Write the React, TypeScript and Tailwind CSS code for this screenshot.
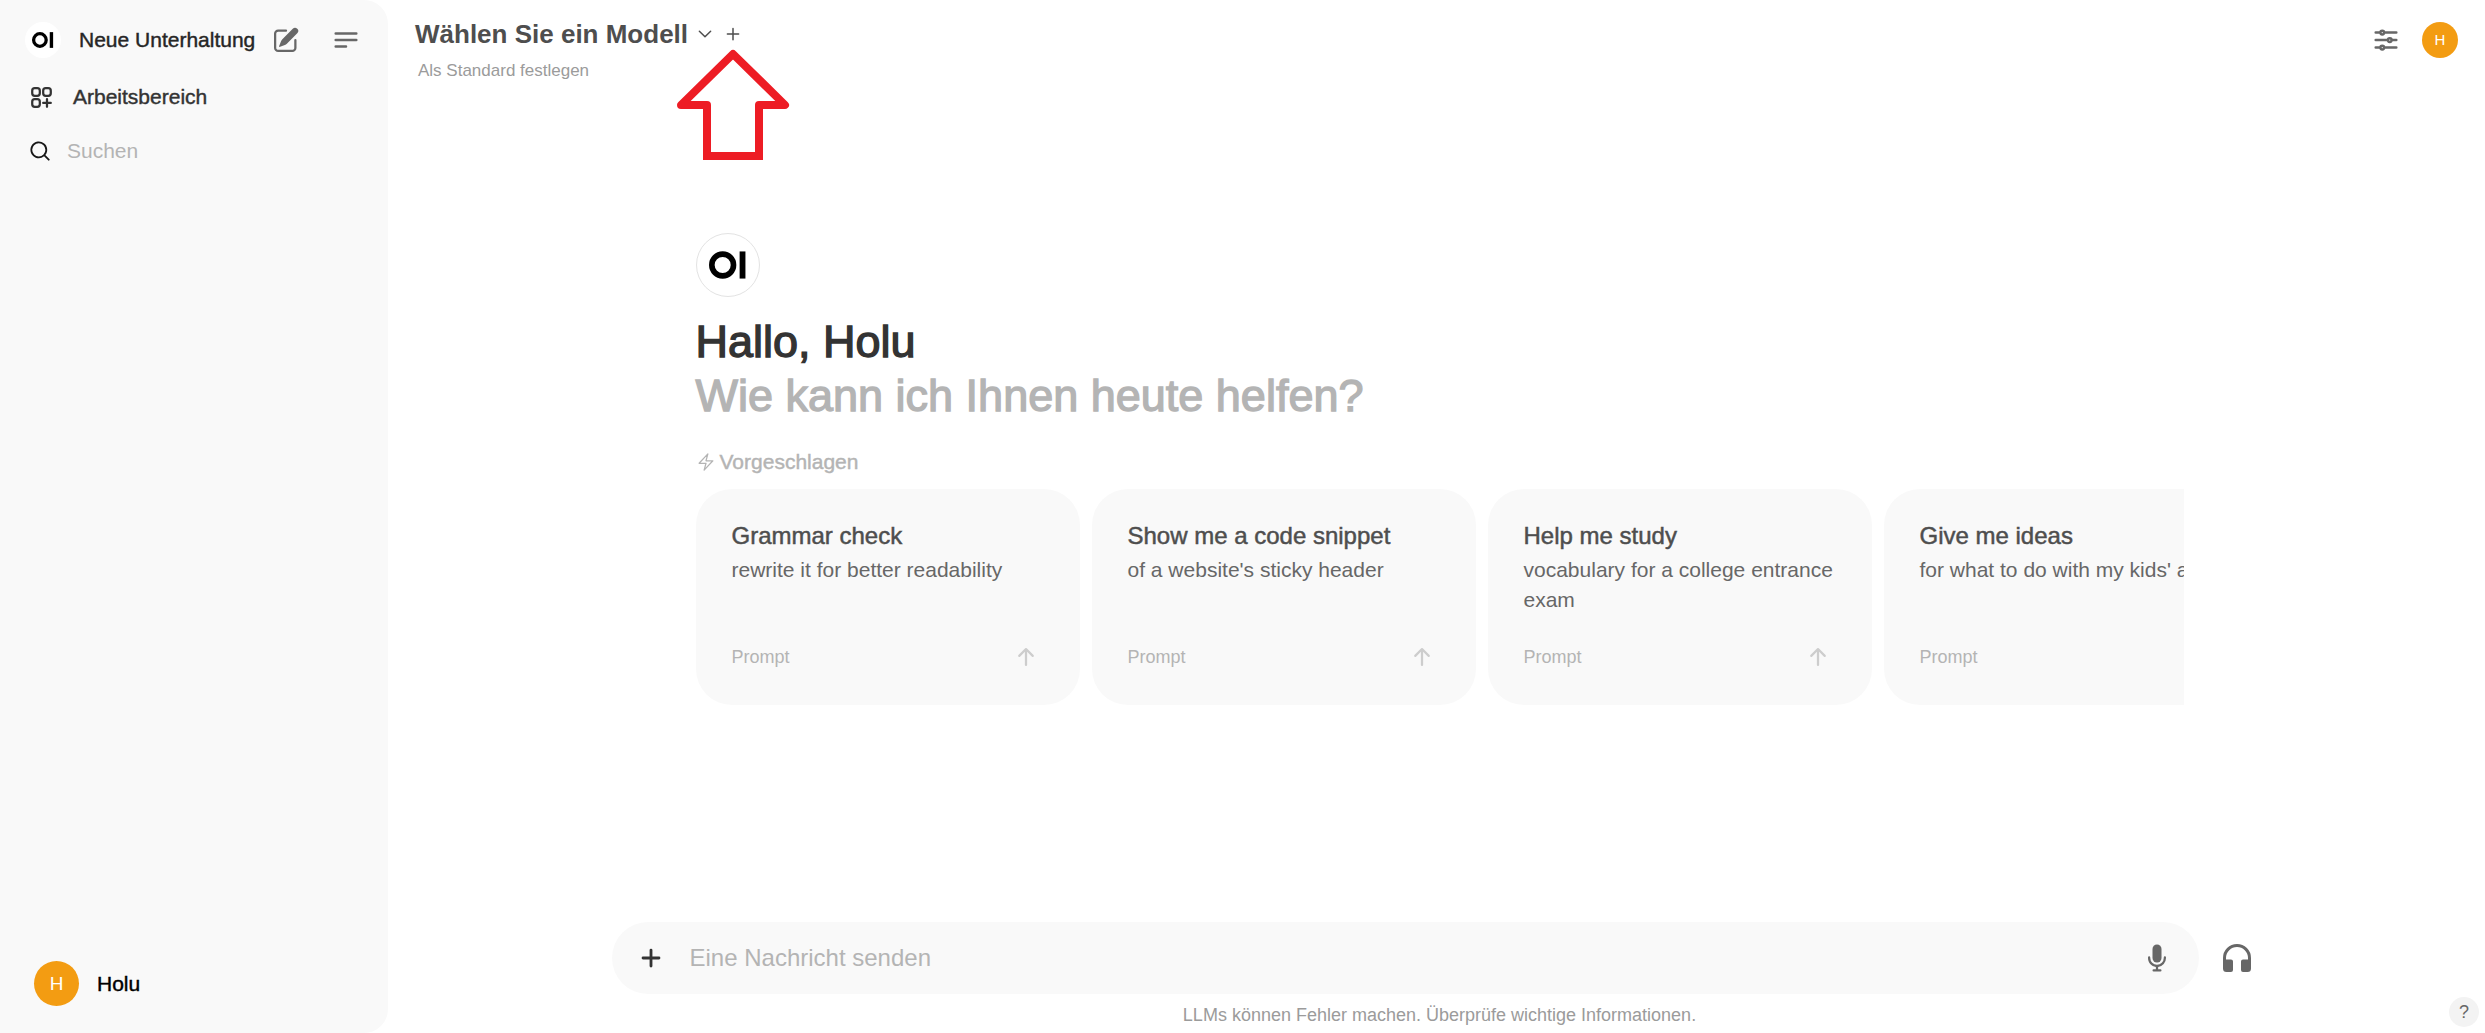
import type { ReactNode } from "react";

type IconProps = { className: string };

function Outline({ className, d, width = 2 }: IconProps & { d: string; width?: number }) {
  return (
    <svg className={className} viewBox="0 0 24 24" fill="none" stroke="currentColor" strokeWidth={width} strokeLinecap="round" strokeLinejoin="round" aria-hidden="true">
      <path d={d} />
    </svg>
  );
}

function Solid({ className, box, paths }: IconProps & { box: string; paths: string[] }) {
  return (
    <svg className={className} viewBox={box} fill="currentColor" aria-hidden="true">
      {paths.map((d) => (
        <path key={d} d={d} fillRule="evenodd" clipRule="evenodd" />
      ))}
    </svg>
  );
}

const PencilSquare = ({ className }: IconProps) => (
  <Solid
    className={className}
    box="0 0 20 20"
    paths={[
      "M5.433 13.917l1.262-3.155A4 4 0 017.58 9.42l6.92-6.918a2.121 2.121 0 013 3l-6.92 6.918c-.383.383-.84.685-1.343.886l-3.154 1.262a.5.5 0 01-.65-.65z",
      "M3.5 5.75c0-.69.56-1.25 1.25-1.25H10A.75.75 0 0010 3H4.75A2.75 2.75 0 002 5.75v9.5A2.75 2.75 0 004.75 18h9.5A2.75 2.75 0 0017 15.25V10a.75.75 0 00-1.5 0v5.25c0 .69-.56 1.25-1.25 1.25h-9.5c-.69 0-1.25-.56-1.25-1.25v-9.5z",
    ]}
  />
);

const Search = ({ className }: IconProps) => (
  <Solid
    className={className}
    box="0 0 20 20"
    paths={["M9 3.5a5.5 5.5 0 100 11 5.5 5.5 0 000-11zM2 9a7 7 0 1112.452 4.391l3.328 3.329a.75.75 0 11-1.06 1.06l-3.329-3.328A7 7 0 012 9z"]}
  />
);

const ArrowUp = ({ className }: IconProps) => (
  <Solid
    className={className}
    box="0 0 16 16"
    paths={["M8 14a.75.75 0 0 1-.75-.75V4.56L4.03 7.78a.75.75 0 0 1-1.06-1.06l4.5-4.5a.75.75 0 0 1 1.06 0l4.5 4.5a.75.75 0 0 1-1.06 1.06L8.75 4.56v8.69A.75.75 0 0 1 8 14Z"]}
  />
);

const PlusBold = ({ className }: IconProps) => (
  <Solid
    className={className}
    box="0 0 16 16"
    paths={["M8.75 3.75a.75.75 0 0 0-1.5 0v3.5h-3.5a.75.75 0 0 0 0 1.5h3.5v3.5a.75.75 0 0 0 1.5 0v-3.5h3.5a.75.75 0 0 0 0-1.5h-3.5v-3.5Z"]}
  />
);

const Microphone = ({ className }: IconProps) => (
  <Solid
    className={className}
    box="0 0 20 20"
    paths={[
      "M7 4a3 3 0 016 0v6a3 3 0 11-6 0V4z",
      "M5.5 9.643a.75.75 0 00-1.5 0V10c0 3.06 2.29 5.585 5.25 5.954V17.5h-1.5a.75.75 0 000 1.5h4.5a.75.75 0 000-1.5h-1.5v-1.546A6.001 6.001 0 0016 10v-.357a.75.75 0 00-1.5 0V10a4.5 4.5 0 01-9 0v-.357z",
    ]}
  />
);

const Headphones = ({ className }: IconProps) => (
  <Solid
    className={className}
    box="0 0 28 28"
    paths={["M0 14a14 14 0 0 1 28 0v10.500a3.500 3.500 0 0 1-3.500 3.500h-4.500a2 2 0 0 1-2-2v-8.500a2 2 0 0 1 2-2h5v-1.500a11 11 0 0 0-22 0v1.500h5a2 2 0 0 1 2 2v8.500a2 2 0 0 1-2 2H3.500A3.500 3.500 0 0 1 0 24.500z"]}
  />
);

function Logo({ className }: IconProps) {
  return (
    <svg className={className} viewBox="0 0 64 64" aria-hidden="true">
      <circle cx="26.500" cy="32" r="11.200" fill="none" stroke="#000" strokeWidth="5.800" />
      <rect x="44" y="18" width="6" height="28" fill="#000" />
    </svg>
  );
}

function PointerArrow() {
  return (
    <svg className="pointer-events-none absolute top-6 left-1/2 h-[112px] w-[114px] -translate-x-1/2" viewBox="0 0 114 112" fill="none" stroke="#ed1c24" strokeWidth="8" aria-hidden="true">
      <path d="M57 5l52 51H83v51H31V56H5z" strokeLinejoin="round" />
      <path d="M31 90v17h52V90" />
    </svg>
  );
}

function IconButton({ label, className, children }: { label: string; className: string; children: ReactNode }) {
  return (
    <button type="button" aria-label={label} className={className}>
      {children}
    </button>
  );
}

const suggestions = [
  { title: "Grammar check", text: "rewrite it for better readability" },
  { title: "Show me a code snippet", text: "of a website's sticky header" },
  { title: "Help me study", text: "vocabulary for a college entrance exam" },
  { title: "Give me ideas", text: "for what to do with my kids' art" },
];

function Sidebar() {
  return (
    <aside className="flex w-[388px] shrink-0 flex-col rounded-r-3xl bg-[#f9f9f9] text-[21px] leading-8">
      <div className="flex items-center px-[25px] pt-[22px]">
        <a href="#" className="flex flex-1 items-center text-[#262626]">
          <span className="mr-[18px] size-9 rounded-full bg-white">
            <Logo className="size-9" />
          </span>
          <span className="whitespace-nowrap [-webkit-text-stroke:0.02em_currentColor]">Neue Unterhaltung</span>
          <PencilSquare className="ml-auto size-[30px] text-[#676767]" />
        </a>
        <IconButton label="Seitenleiste" className="mr-0.5 ml-[30px] text-[#676767]">
          <Outline className="size-[30px]" d="M3.750 6.750h16.500M3.750 12h16.500m-16.500 5.250H12" />
        </IconButton>
      </div>
      <a href="#" className="mt-[23px] flex items-center gap-[18px] pl-7 text-[#333333]">
        <Outline
          className="size-[27px]"
          d="M13.500 16.875h3.375m0 0h3.375m-3.375 0V13.500m0 3.375v3.375M6 10.500h2.250a2.250 2.250 0 002.250-2.250V6a2.250 2.250 0 00-2.250-2.250H6A2.250 2.250 0 003.750 6v2.250A2.250 2.250 0 006 10.500zm0 9.750h2.250A2.250 2.250 0 0010.500 18v-2.250a2.250 2.250 0 00-2.250-2.250H6a2.250 2.250 0 00-2.250 2.250V18A2.250 2.250 0 006 20.250zm9.750-9.750H18a2.250 2.250 0 002.250-2.250V6A2.250 2.250 0 0018 3.750h-2.250A2.250 2.250 0 0013.500 6v2.250a2.250 2.250 0 002.250 2.250z"
        />
        <span className="[-webkit-text-stroke:0.02em_currentColor]">Arbeitsbereich</span>
      </a>
      <label className="mt-[22px] flex items-center gap-[15px] pl-7 text-[#171717]">
        <Search className="size-6" />
        <input type="text" aria-label="Suchen" placeholder="Suchen" className="h-8 w-[270px] bg-transparent outline-none placeholder:text-[#b4b4b4]" />
      </label>
      <button type="button" className="mt-auto mb-[27px] ml-[34px] flex items-center gap-[18px] text-black">
        <span className="flex size-[45px] items-center justify-center rounded-full bg-[#f39c12] text-[19px] text-white">H</span>
        <span className="[-webkit-text-stroke:0.02em_currentColor]">Holu</span>
      </button>
    </aside>
  );
}

function Header() {
  return (
    <header className="flex items-start justify-between pt-[18px] pr-[27px] pl-[21px]">
      <div>
        <div className="flex items-center text-[#4e4e4e]">
          <button type="button" className="flex items-center gap-2 text-[26px] leading-8 font-bold">
            Wählen Sie ein Modell
            <Outline className="size-[18px]" d="M19.500 8.250l-7.500 7.500-7.500-7.500" />
          </button>
          <div className="relative ml-2.5 flex">
            <IconButton label="Modell hinzufügen" className="text-[#4e4e4e]">
              <Outline className="size-[18px]" d="M12 4.500v15m7.500-7.500h-15" />
            </IconButton>
            <PointerArrow />
          </div>
        </div>
        <button type="button" className="mt-[9px] ml-[3px] block text-[17px] leading-6 text-[#9b9b9b]">Als Standard festlegen</button>
      </div>
      <div className="mt-1 flex items-center gap-[21px]">
        <IconButton label="Steuerung" className="text-[#676767]">
          <Outline
            className="size-[30px]"
            d="M10.500 6h9.750M10.500 6a1.500 1.500 0 11-3 0m3 0a1.500 1.500 0 10-3 0M3.750 6H7.500m3 12h9.750m-9.750 0a1.500 1.500 0 01-3 0m3 0a1.500 1.500 0 00-3 0m-3.750 0H7.500m9-6h3.750m-3.750 0a1.500 1.500 0 01-3 0m3 0a1.500 1.500 0 00-3 0m-9.750 0h9.750"
          />
        </IconButton>
        <button type="button" className="flex size-9 items-center justify-center rounded-full bg-[#f39c12] text-[15px] text-white">H</button>
      </div>
    </header>
  );
}

function Welcome() {
  return (
    <section className="mx-auto w-full max-w-[1488px]">
      <div className="size-16 rounded-full border border-[#e3e3e3]">
        <Logo className="size-full" />
      </div>
      <h1 className="mt-[18px] text-[45px] leading-[54px] text-[#333333] [-webkit-text-stroke:0.03em_currentColor]">
        Hallo, Holu
        <span className="block text-[#b4b4b4]">Wie kann ich Ihnen heute helfen?</span>
      </h1>
      <h2 className="mt-6 flex items-center gap-1 text-[21px] leading-[30px] text-[#b4b4b4] [-webkit-text-stroke:0.02em_currentColor]">
        <Outline className="size-5" width={1.5} d="m3.750 13.500 10.500-11.250L12 10.500h8.250L9.750 21.750 12 13.500H3.750Z" />
        Vorgeschlagen
      </h2>
      <div className="mt-3 flex gap-3 overflow-hidden">
        {suggestions.map((s) => (
          <button key={s.title} type="button" className="flex h-[216px] w-[384px] shrink-0 flex-col rounded-[36px] bg-[#f9f9f9] px-9 pt-[30px] pb-8 text-left">
            <span className="text-2xl leading-[34px] text-[#4e4e4e] [-webkit-text-stroke:0.02em_currentColor]">{s.title}</span>
            <span className="mt-0.5 w-[312px] text-[21px] leading-[30px] text-[#676767]">{s.text}</span>
            <span className="mt-auto flex w-full items-center justify-between pr-1.5 text-[18px] leading-8 text-[#b4b4b4]">
              Prompt
              <ArrowUp className="size-6 text-[#cdcdcd]" />
            </span>
          </button>
        ))}
      </div>
    </section>
  );
}

function Composer() {
  return (
    <footer className="relative">
      <form className="mx-auto flex w-full max-w-[1656px] items-center">
        <div className="flex h-[72px] flex-1 items-center rounded-full bg-[#f9f9f9] pr-[27px] pl-6">
          <IconButton label="Mehr" className="text-[#333333]">
            <PlusBold className="size-[30px]" />
          </IconButton>
          <input type="text" aria-label="Eine Nachricht senden" placeholder="Eine Nachricht senden" className="ml-6 flex-1 bg-transparent text-2xl outline-none placeholder:text-[#b4b4b4]" />
          <IconButton label="Spracheingabe" className="text-[#676767]">
            <Microphone className="size-[30px]" />
          </IconButton>
        </div>
        <IconButton label="Anruf" className="mr-[17px] ml-6 text-[#676767]">
          <Headphones className="size-7" />
        </IconButton>
      </form>
      <p className="pt-[9px] pb-1.5 text-center text-[18px] leading-6 text-[#9b9b9b]">
        LLMs können Fehler machen. Überprüfe wichtige Informationen.
      </p>
      <button type="button" className="absolute right-1.5 bottom-1.5 flex size-[30px] items-center justify-center rounded-full bg-[#f3f3f3] text-[18px] text-[#676767]">?</button>
    </footer>
  );
}

export default function App() {
  return (
    <div className="flex min-h-screen bg-white font-['Liberation_Sans',Arial,sans-serif]">
      <Sidebar />
      <main className="flex min-w-0 flex-1 flex-col pl-1.5">
        <Header />
        <div className="flex flex-1 items-center pb-[68px]">
          <Welcome />
        </div>
        <Composer />
      </main>
    </div>
  );
}
